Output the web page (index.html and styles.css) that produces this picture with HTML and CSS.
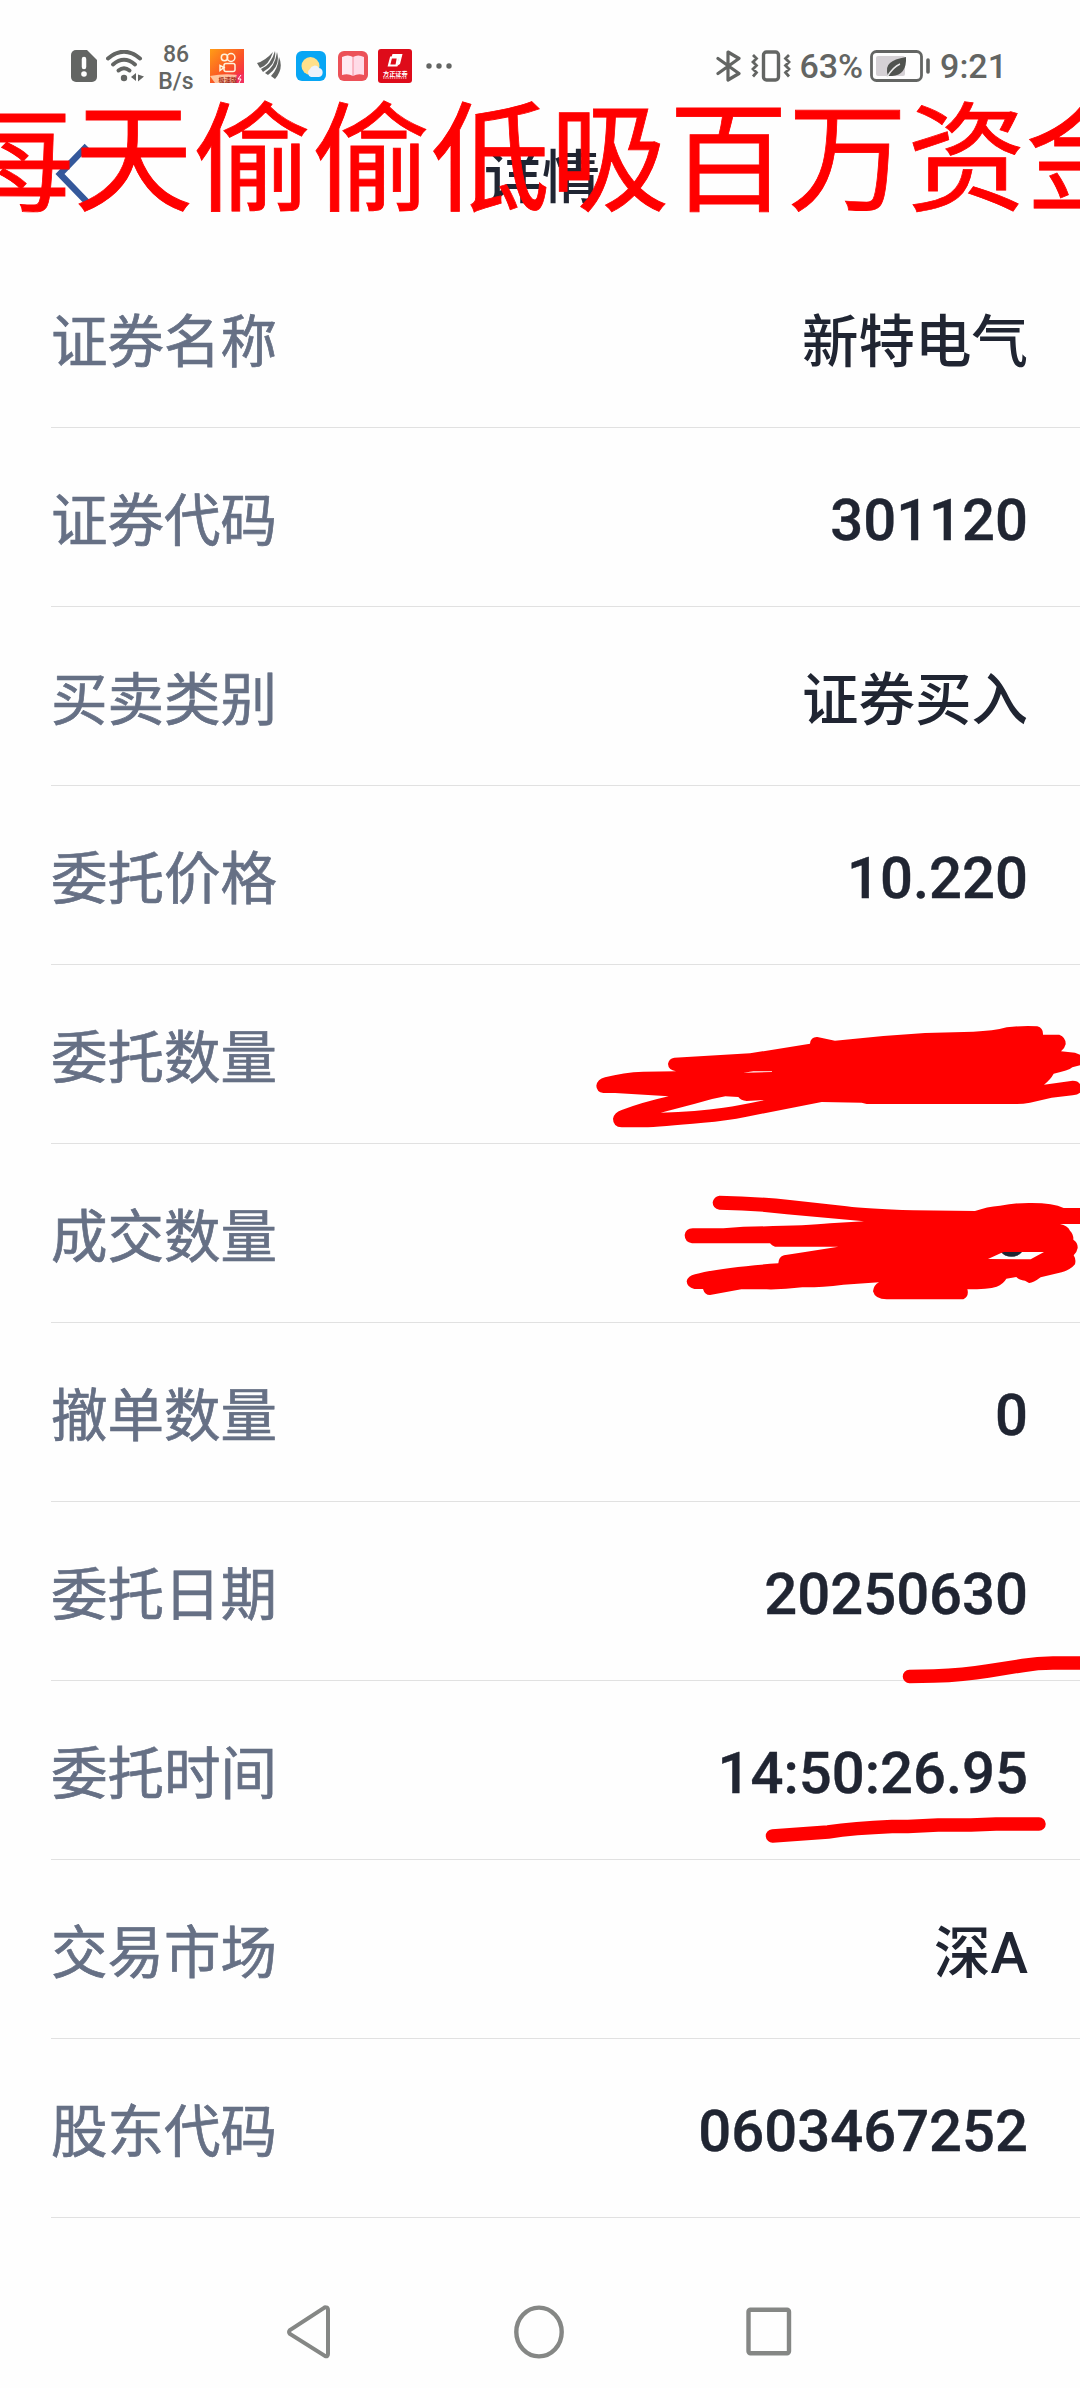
FILE: index.html
```html
<!DOCTYPE html>
<html lang="zh-CN">
<head>
    <meta charset="UTF-8">
    <meta name="viewport" content="width=device-width, initial-scale=1.0">
    <title>详情</title>
    <link rel="stylesheet" href="styles.css">
</head>
<body>
    <div class="status-bar">
        <div class="status-left">
            <svg class="icon-sim" width="26" height="32" viewBox="0 0 26 32">
                <path d="M5 0H16L26 10V27a5 5 0 0 1-5 5H5a5 5 0 0 1-5-5V5a5 5 0 0 1 5-5z" fill="#636563"/>
                <path d="M13 9v8" stroke="#fff" stroke-width="4.5" stroke-linecap="round"/>
                <circle cx="13" cy="24" r="2.8" fill="#fff"/>
            </svg>
            <svg class="icon-wifi" width="39" height="32" viewBox="0 0 39 32">
                <g fill="none" stroke="#636563" stroke-width="4" stroke-linecap="round">
                    <path d="M2 8.500Q18-5 34 8.500"/>
                    <path d="M7 14.500Q18 5 29 14.500"/>
                    <path d="M12.500 20.500Q18 16 23.500 20.500"/>
                </g>
                <circle cx="18" cy="28" r="3.200" fill="#636563"/>
                <path d="M25 27l5-4v8zM32 24.500l6 2-6 5z" fill="#636563"/>
            </svg>
            <div class="speed"><span>86</span><span>B/s</span></div>
            <svg class="icon-video" width="34" height="34" viewBox="0 0 34 34">
                <defs>
                    <linearGradient id="orange" x1="0" y1="0" x2="1" y2="1">
                        <stop offset="0" stop-color="#ff9d16"/>
                        <stop offset="0.550" stop-color="#fb5525"/>
                        <stop offset="1" stop-color="#f31b5a"/>
                    </linearGradient>
                </defs>
                <rect width="34" height="34" fill="url(#orange)"/>
                <g fill="none" stroke="#fff3dc" stroke-width="1.500">
                    <circle cx="14.500" cy="8.500" r="3.200"/>
                    <circle cx="21" cy="8.500" r="3.900"/>
                    <rect x="14" y="14.500" width="11" height="8" rx="2"/>
                    <path d="M14 18.500l-4-2v5z"/>
                </g>
                <path d="M0 27Q17 23.500 34 27L27 34H5z" fill="#ffe0bd" opacity="0.800"/>
                <path d="M27 25h7v9h-9z" fill="#f3315c"/>
                <path d="M31 26l-3 4h3l-2 4" fill="none" stroke="#fff" stroke-width="1"/>
                <text class="tiny" x="8.500" y="32.500" font-size="6.200" font-weight="700" fill="#a3301c">极速版</text>
            </svg>
            <svg class="icon-feather" width="24" height="29" viewBox="0 0 24 29">
                <path d="M0 12Q8 10 16 1Q12 14 3 17zM4 18Q14 14 18 0Q20 13 6 21zM8 22Q18 16 20 1Q24 15 11 24zM14 25Q21 18 22 6Q27 18 18 28z" fill="#636563"/>
            </svg>
            <svg class="icon-weather" width="30" height="30" viewBox="0 0 30 30">
                <rect width="30" height="30" rx="6" fill="#08a6f4"/>
                <circle cx="14.500" cy="15" r="9" fill="#ffe08a"/>
                <path d="M15 26a4.500 4.500 0 0 1-1-8 5 5 0 0 1 9-1 4.600 4.600 0 0 1 0 9z" fill="#eef2fb"/>
            </svg>
            <svg class="icon-book" width="30" height="30" viewBox="0 0 30 30">
                <rect width="30" height="30" rx="6" fill="#ec5158"/>
                <path d="M4 6Q10 3 15 6V25Q10 22 4 24z" fill="#ffe9f1"/>
                <path d="M15 6Q20 3 26 6V24Q20 22 15 25z" fill="#ffdbe7"/>
                <path d="M15 6V25" stroke="#f58b9b" stroke-width="1"/>
            </svg>
            <svg class="icon-broker" width="34" height="34" viewBox="0 0 34 34">
                <rect width="34" height="34" rx="3" fill="#de0b1a"/>
                <path d="M14.500 5H24.500L22 15L19 17L21 8H13.500z" fill="#fff"/>
                <path d="M13 8.500H20L18.500 16.500H11z" fill="none" stroke="#fff" stroke-width="2.200"/>
                <text class="tiny" x="5" y="26.500" font-size="6.200" font-weight="700" fill="#fff">方正证券</text>
                <path d="M5 29H29" stroke="#fff" stroke-width="0.900" stroke-dasharray="1.500 0.700"/>
            </svg>
            <svg class="icon-more" width="27" height="6" viewBox="0 0 27 6">
                <circle cx="3" cy="3" r="2.700" fill="#636563"/>
                <circle cx="13" cy="3" r="2.700" fill="#636563"/>
                <circle cx="23" cy="3" r="2.700" fill="#636563"/>
            </svg>
        </div>
        <div class="status-right">
            <svg class="icon-bluetooth" width="26" height="32" viewBox="0 0 26 32">
                <path d="M2 8.500L23 23.500L12 30V2L23 8.500L2 23.500" fill="none" stroke="#636563" stroke-width="3.200" stroke-linejoin="round" stroke-linecap="round"/>
            </svg>
            <svg class="icon-vibrate" width="40" height="32" viewBox="0 0 40 32">
                <rect x="12.500" y="2" width="15" height="28" rx="3" fill="none" stroke="#636563" stroke-width="3.400"/>
                <path d="M2 5l3.500 3.500L2 12l3.500 3.500L2 19l3.500 3.500L2 26.500M38 5l-3.500 3.500L38 12l-3.500 3.500L38 19l-3.500 3.500L38 26.500" fill="none" stroke="#636563" stroke-width="2.800"/>
            </svg>
            <span class="status-text percent">63%</span>
            <svg class="icon-battery" width="61" height="32" viewBox="0 0 61 32">
                <rect x="1.500" y="1.500" width="50" height="29" rx="5" fill="none" stroke="#636563" stroke-width="2.800"/>
                <rect x="6" y="6" width="29" height="20" rx="2" fill="#d5d1d5"/>
                <path d="M36 7Q37 25 22 26L18 26Q15 17 20 13Q24 9 36 7z" fill="#50534f"/>
                <path d="M17 27Q23 17 30 14" fill="none" stroke="#e9e9e9" stroke-width="1.400"/>
                <path d="M58 10v12" stroke="#636563" stroke-width="3.600" stroke-linecap="round"/>
            </svg>
            <span class="status-text clock">9:21</span>
        </div>
    </div>

    <div class="header">
        <svg class="back" width="34" height="64" viewBox="0 0 34 64">
            <path d="M32 4L5 32L32 60" fill="none" stroke="#34589b" stroke-width="6.500"/>
        </svg>
        <h1 class="title">详情</h1>
        <div class="banner">每天偷偷低吸百万资金</div>
    </div>

    <div class="details">
        <div class="row"><span class="label">证券名称</span><span class="value cn">新特电气</span></div>
        <div class="row"><span class="label">证券代码</span><span class="value">301120</span></div>
        <div class="row"><span class="label">买卖类别</span><span class="value cn">证券买入</span></div>
        <div class="row"><span class="label">委托价格</span><span class="value">10.220</span></div>
        <div class="row">
            <span class="label">委托数量</span>
            <svg class="mark mark-order" width="500" height="130" viewBox="0 0 1500 390">
                <path d="M283 143L510 130L690 101Q692 80 712 81L765 92Q900 77 1035 69L1180 65Q1240 63 1280 52Q1330 46 1372 49Q1390 54 1389 74H1438Q1458 82 1457 103Q1454 116 1443 124L1485 128L1500 134V166L1477 172Q1466 182 1421 191Q1412 208 1392 224L1478 212Q1494 212 1500 222V248Q1493 255 1478 256L1415 263L1350 278Q1330 282 1310 282H860L845 278L725 276L500 320Q440 332 370 338Q240 350 190 352H125Q99 350 99 326Q102 308 125 300Q190 276 266 259L105 249H70Q49 245 49 227Q52 208 75 202Q130 187 190 185L288 184Q265 180 264 162Q266 146 283 143z
                    M242 308L345 281Q390 267 436 259L475 261Q482 272 500 273L555 270Q480 286 430 293Q350 305 242 308z
                    M490 188L520 184H576V186z"/>
            </svg>
        </div>
        <div class="row">
            <span class="label">成交数量</span><span class="value">0</span>
            <svg class="mark mark-deal" width="420" height="130" viewBox="0 0 1260 390">
                <path d="M178 47Q280 49 390 60L560 79Q620 87 760 91L945 93Q980 80 1020 77Q1070 68 1115 69Q1180 69 1211 84H1260V132H1200Q1223 137 1230 152Q1241 163 1240 179Q1254 188 1253 204Q1250 219 1241 226Q1249 238 1245 253Q1232 269 1205 277L1142 292Q1118 310 1107 309L1095 302Q1078 301 1069 291L1039 296Q1030 312 1010 320Q985 328 922 328Q928 348 910 358H680Q645 358 639 334Q641 315 657 307L550 314Q480 323 427 322Q370 329 320 328L244 328L150 345Q134 345 129 327H103Q81 322 80 304Q84 287 105 283Q180 262 355 250Q356 230 372 226L440 215L535 200H345Q335 197 330 190H96Q74 186 74 165Q77 145 98 145H190L250 140Q430 138 510 130L612 124L380 103Q280 90 178 89Q158 86 158 67Q162 49 178 47z
                    M984 237L1025 218L1032 216H1152L1112 238z"/>
            </svg>
        </div>
        <div class="row"><span class="label">撤单数量</span><span class="value">0</span></div>
        <div class="row">
            <span class="label">委托日期</span><span class="value">20250630</span>
            <svg class="mark mark-date" width="180" height="36" viewBox="0 0 180 36">
                <path class="stroke" d="M9.500 23.500L34 23Q64 22 88 18L123 12.500Q140 9.500 158 10H190"/>
            </svg>
        </div>
        <div class="row">
            <span class="label">委托时间</span><span class="value">14:50:26.95</span>
            <svg class="mark mark-time" width="290" height="34" viewBox="0 0 290 34">
                <path class="stroke" d="M12.500 26L68 22Q94 18 132 16.500H148L178 15H211L236 14H279"/>
            </svg>
        </div>
        <div class="row"><span class="label">交易市场</span><span class="value cn">深A</span></div>
        <div class="row"><span class="label">股东代码</span><span class="value">0603467252</span></div>
    </div>

    <div class="nav-bar">
        <svg width="44" height="54" viewBox="0 0 44 54">
            <path d="M39 2.500Q41 2 41 5V49Q41 52 38 51L3 29Q1 27 3 25L37 3Q38 2 39 2.500z" fill="none" stroke="#858785" stroke-width="4"/>
        </svg>
        <svg width="50" height="54" viewBox="0 0 50 54">
            <ellipse cx="25" cy="27" rx="22.700" ry="24.400" fill="none" stroke="#858785" stroke-width="4.400"/>
        </svg>
        <svg width="46" height="50" viewBox="0 0 46 50">
            <rect x="2.500" y="2.700" width="40.500" height="43.500" rx="2" fill="none" stroke="#858785" stroke-width="4.400"/>
        </svg>
    </div>
</body>
</html>
```

FILE: styles.css
```css
body {
    margin: 0;
    height: 2388px;
    overflow: hidden;
    background-color: #fefefe;
    font-family: Roboto, "Noto Sans CJK SC", sans-serif;
    color: #202532;
}
svg {
    display: block;
    flex: none;
}
.status-bar {
    display: flex;
    justify-content: space-between;
    box-sizing: border-box;
    height: 130px;
    padding: 1px 73px 0 71px;
    color: #636563;
}
.status-left, .status-right {
    display: flex;
    align-items: center;
}
.icon-wifi {
    margin-left: 9px;
}
.speed {
    display: flex;
    flex-direction: column;
    align-items: center;
    width: 36px;
    margin: 4px 0 0 13px;
    font-size: 23px;
    font-weight: 500;
    line-height: 27px;
}
.icon-video {
    margin-left: 16px;
}
.icon-feather {
    margin-left: 13px;
}
.icon-weather {
    margin-left: 15px;
}
.icon-book {
    margin-left: 12px;
}
.icon-broker {
    margin-left: 10px;
}
.icon-more {
    margin-left: 14px;
}
.icon-vibrate {
    margin-left: 9px;
}
.status-text {
    font-size: 34px;
    font-weight: 500;
    line-height: 40px;
    white-space: nowrap;
}
.percent {
    margin-left: 8px;
}
.icon-battery {
    margin-left: 7px;
}
.clock {
    margin-left: 9px;
}
.tiny {
    font-family: "Noto Sans CJK SC", sans-serif;
}
.header {
    position: relative;
    display: flex;
    align-items: center;
    justify-content: center;
    height: 96px;
    margin-bottom: 23px;
}
.back {
    position: absolute;
    left: 55px;
    top: 12px;
}
.title {
    margin: 0;
    padding-left: 4px;
    font-size: 58px;
    font-weight: 500;
    line-height: 90px;
}
/* caption laid over the title bar */
.banner {
    position: absolute;
    left: -45px;
    top: -66px;
    font-family: "Noto Sans CJK SC", sans-serif;
    font-size: 119px;
    line-height: 172px;
    white-space: nowrap;
    color: #ff0000;
    -webkit-text-stroke: 0.8px #ff0000;
}
.details {
    margin-left: 51px;
}
.row {
    position: relative;
    display: flex;
    align-items: center;
    justify-content: space-between;
    box-sizing: border-box;
    height: 179px;
    padding: 6px 52px 0 0;
    border-bottom: 1px solid #e1e1e1;
}
.label {
    margin-top: -8px;
    font-size: 56.500px;
    color: #667085;
    -webkit-text-stroke: 0.7px #667085;
}
.value {
    font-size: 58px;
    font-weight: 500;
    -webkit-text-stroke: 0.4px #202532;
}
.value.cn {
    margin-top: -8px;
    font-size: 56.500px;
    -webkit-text-stroke: 0;
}
.mark {
    position: absolute;
    z-index: 1;
    fill: #ff0000;
    fill-rule: evenodd;
}
.mark .stroke {
    fill: none;
    stroke: #ff0000;
    stroke-width: 13.500;
    stroke-linecap: round;
}
.mark-order {
    left: 529px;
    top: 45px;
}
.mark-deal {
    left: 609px;
    top: 36px;
}
.mark-date {
    left: 849px;
    top: 151px;
}
.mark-time {
    left: 709px;
    top: 129px;
}
.nav-bar {
    display: flex;
    align-items: center;
    justify-content: space-between;
    height: 54px;
    padding: 87px 288px 0 287px;
}
```
